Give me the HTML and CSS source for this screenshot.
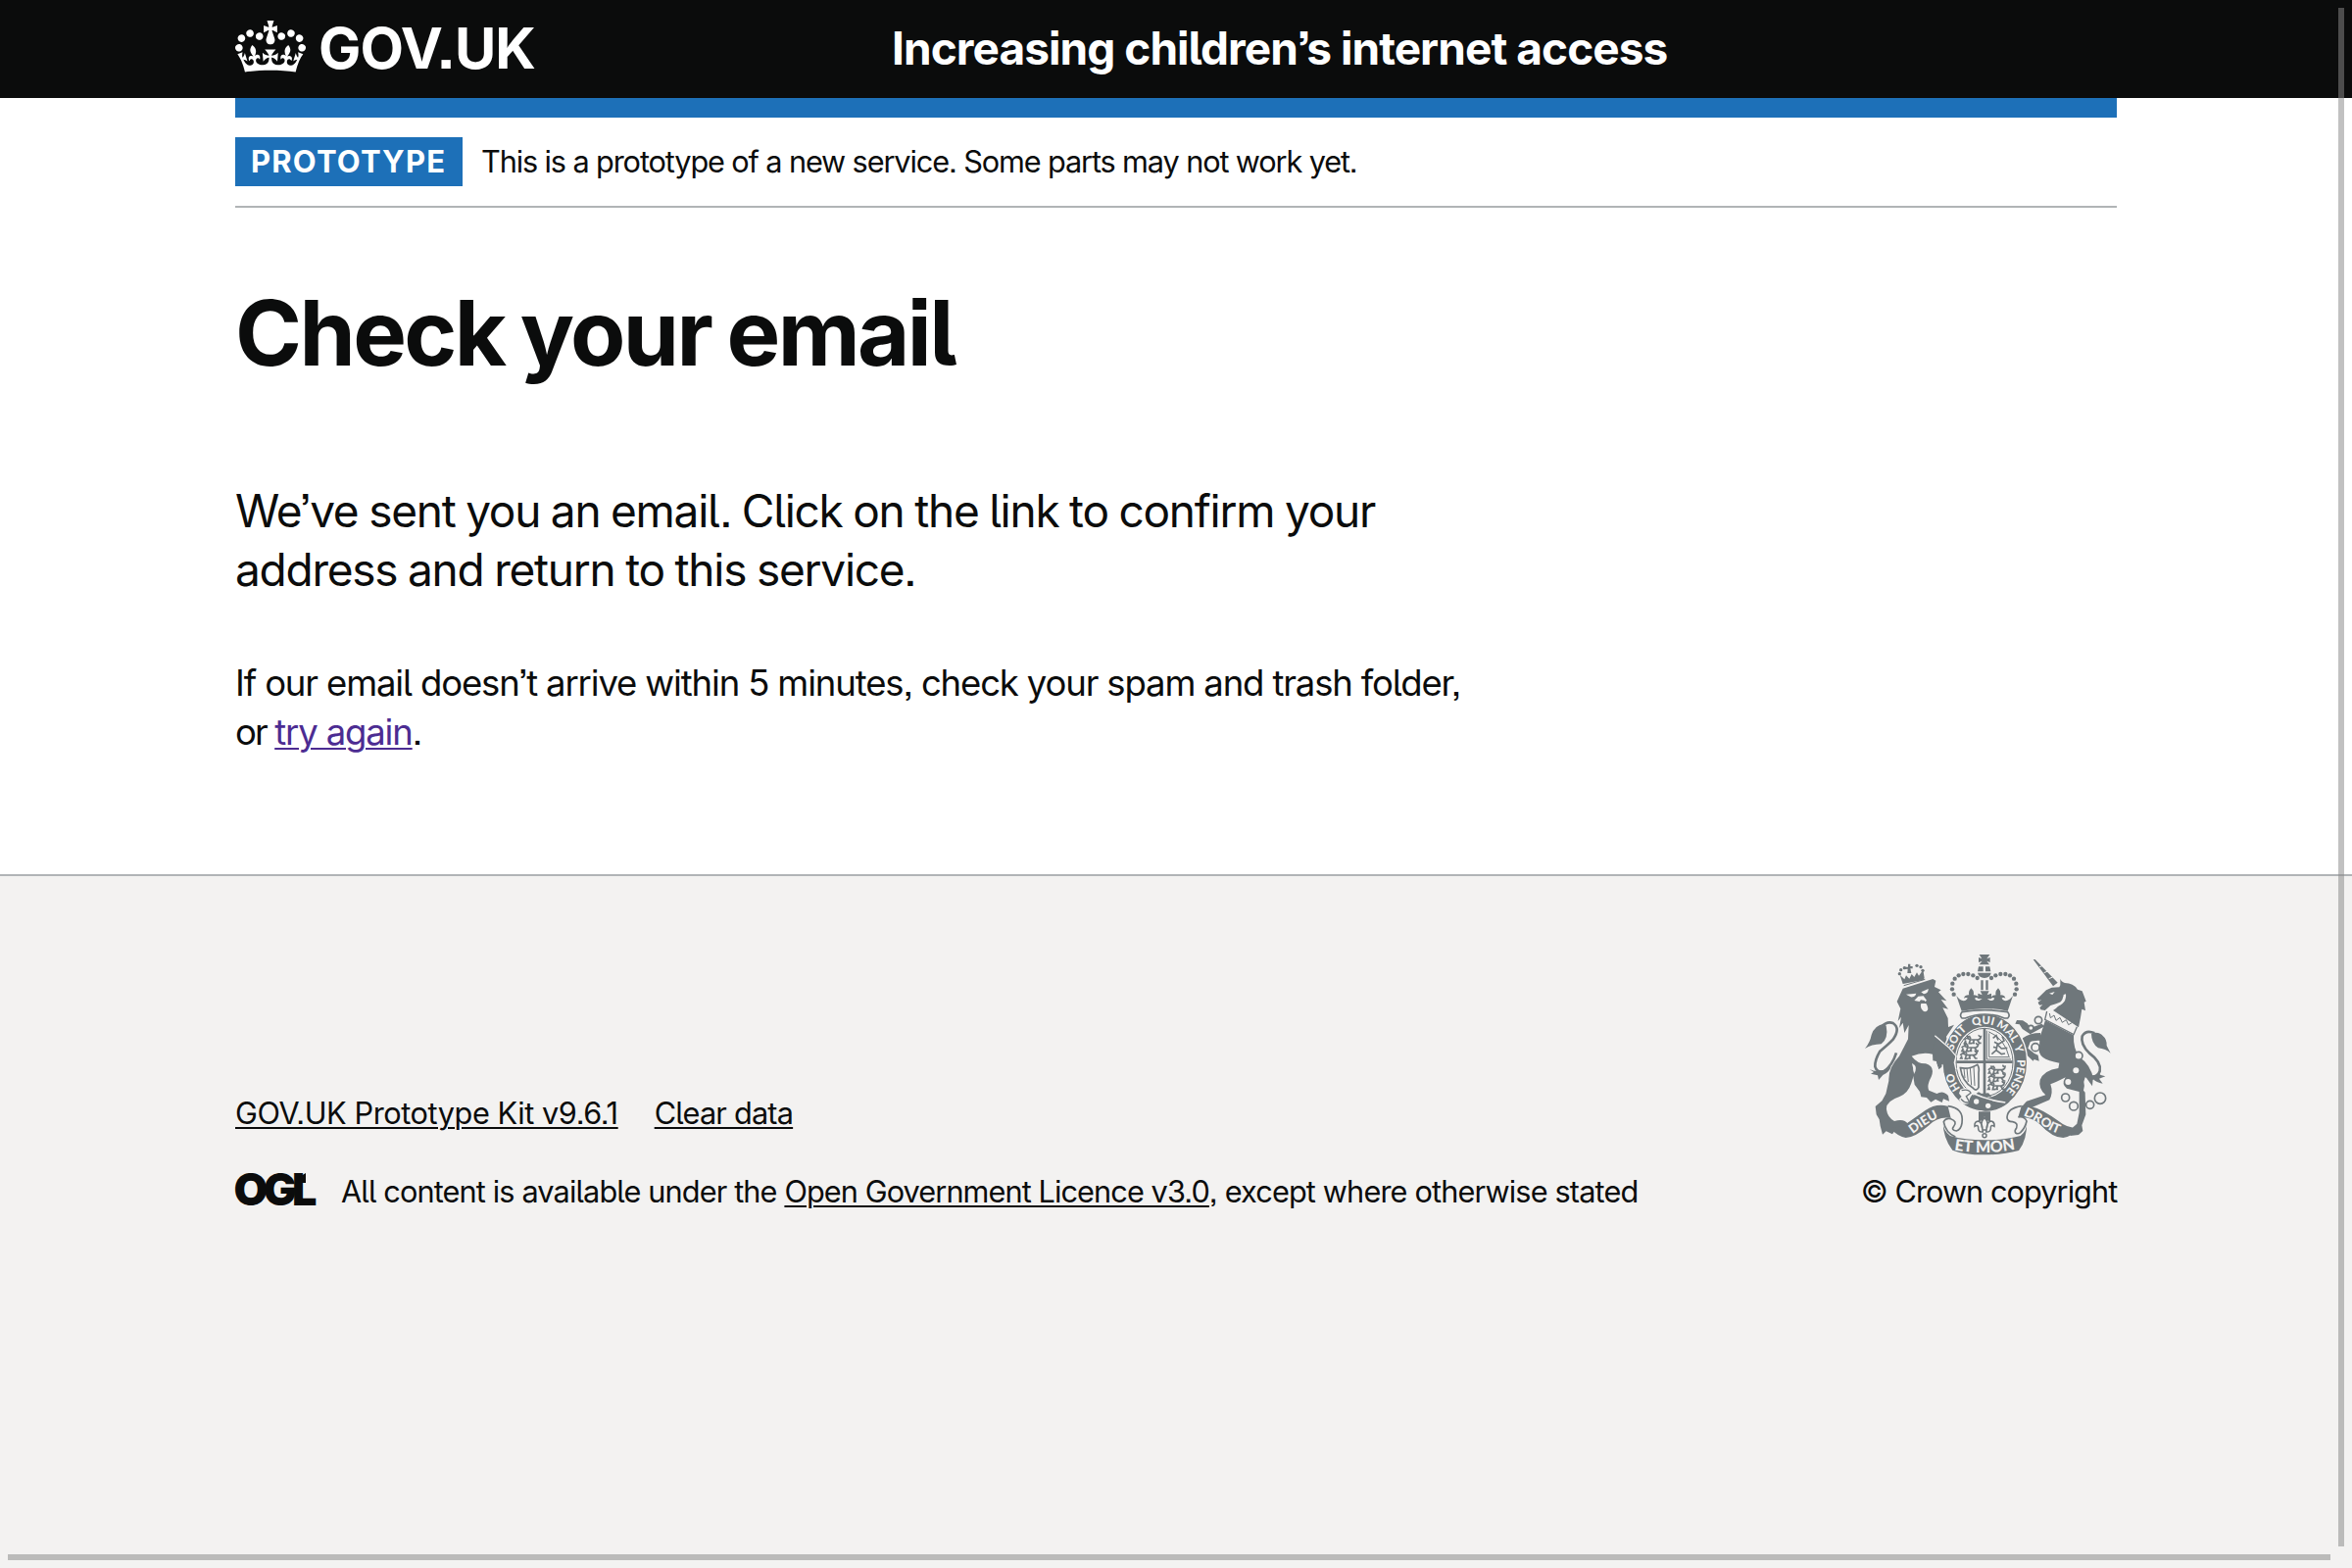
FILE: index.html
```html
<!DOCTYPE html>
<html lang="en">
<head>
<meta charset="utf-8">
<title>Check your email – Increasing children’s internet access</title>
<link rel="stylesheet" href="styles.css">
</head>
<body>
<header class="header">
  <div class="container header-row">
    <a class="logo" href="#">
      <svg class="crown" viewBox="0 0 132 97" aria-hidden="true"><path fill="currentColor" fill-rule="evenodd" d="M25 30.2c3.5 1.5 7.7-.2 9.1-3.7 1.5-3.6-.2-7.8-3.9-9.2-3.6-1.4-7.6.3-9.1 3.9-1.4 3.5.3 7.5 3.9 9zM9 39.5c3.6 1.5 7.8-.2 9.2-3.7 1.5-3.6-.2-7.8-3.9-9.1-3.6-1.5-7.6.2-9.1 3.8-1.4 3.5.3 7.5 3.8 9zM4.4 57.2c3.5 1.5 7.7-.2 9.1-3.8 1.5-3.6-.2-7.7-3.9-9.1-3.5-1.5-7.6.3-9.1 3.8-1.4 3.5.3 7.6 3.9 9.1zm38.3-21.4c3.5 1.5 7.7-.2 9.1-3.8 1.5-3.6-.2-7.7-3.9-9.1-3.6-1.5-7.6.3-9.1 3.8-1.3 3.6.4 7.7 3.9 9.1zm64.4-5.6c-3.6 1.5-7.8-.2-9.1-3.7-1.5-3.6.2-7.8 3.8-9.2 3.6-1.4 7.7.3 9.2 3.9 1.3 3.5-.4 7.5-3.9 9zm15.9 9.3c-3.6 1.5-7.7-.2-9.1-3.7-1.5-3.6.2-7.8 3.7-9.1 3.6-1.5 7.7.2 9.2 3.8 1.5 3.5-.3 7.5-3.8 9zm4.7 17.7c-3.6 1.5-7.8-.2-9.2-3.8-1.5-3.6.2-7.7 3.9-9.1 3.6-1.5 7.7.3 9.2 3.8 1.3 3.5-.4 7.6-3.9 9.1zM89.3 35.8c-3.6 1.5-7.8-.2-9.2-3.8-1.4-3.6.2-7.7 3.9-9.1 3.6-1.5 7.7.3 9.2 3.8 1.4 3.6-.3 7.7-3.9 9.1zM69.7 17.7l8.9 4.7V9.3l-8.9 2.8c-.2-.3-.5-.6-.9-.9L72.4 0H59.6l3.5 11.2c-.3.3-.6.5-.9.9l-8.8-2.8v13.1l8.8-4.7c.3.3.6.7.9.9l-5 15.4v.1c-.2.8-.4 1.6-.4 2.4 0 4.1 3.1 7.5 7 8.1h.2c.3 0 .7.1 1 .1.4 0 .7 0 1-.1h.2c4-.6 7.1-4.1 7.1-8.1 0-.8-.1-1.7-.4-2.4V34l-5.1-15.4c.4-.2.7-.6 1-.9zM66 92.8c16.9 0 32.8 1.1 47.1 3.2 4-16.9 8.9-26.7 14-33.5l-9.6-3.4c1 4.9 1.1 7.2 0 10.2-1.5-1.4-3-4.3-4.2-8.7L108.6 76c2.8-2 5-3.2 7.5-3.3-4.4 9.4-10 11.9-13.6 11.2-4.3-.8-6.3-4.6-5.6-7.9 1-4.7 5.7-5.9 8-.5 4.3-8.7-3-11.4-7.6-8.8 7.1-7.2 7.9-13.5 2.1-21.1-8 6.1-8.1 12.3-4.5 20.8-4.7-5.4-12.1-2.5-9.5 6.2 3.4-5.2 7.9-2 7.2 3.1-.6 4.3-6.4 7.8-13.5 7.2-10.3-.9-10.9-8-11.2-13.8 2.5-.5 7.1 1.8 11 7.3L80.2 60c-4.1 4.4-8 5.3-12.3 5.4 1.4-4.4 8-11.6 8-11.6H55.5s6.4 7.2 7.9 11.6c-4.2-.1-8-1-12.3-5.4l1.4 16.4c3.9-5.5 8.5-7.7 10.9-7.3-.3 5.8-.9 12.8-11.1 13.8-7.2.6-12.9-2.9-13.5-7.2-.7-5 3.8-8.3 7.1-3.1 2.7-8.7-4.6-11.6-9.4-6.2 3.7-8.5 3.6-14.7-4.6-20.8-5.8 7.6-5 13.9 2.2 21.1-4.7-2.6-11.9.1-7.7 8.8 2.3-5.5 7.1-4.2 8.1.5.7 3.3-1.3 7.1-5.7 7.9-3.5.7-9-1.8-13.5-11.2 2.5.1 4.7 1.3 7.5 3.3l-4.7-15.4c-1.2 4.4-2.7 7.2-4.3 8.7-1.1-3-.9-5.3 0-10.2l-9.5 3.4c5 6.9 9.9 16.7 14 33.5 14.8-2.1 30.8-3.2 47.7-3.2z"/></svg>
      <span class="logo-text">GOV.UK</span>
    </a>
    <a class="service-name" href="#">Increasing children’s internet access</a>
  </div>
</header>

<div class="container">
  <div class="header-bar"></div>
  <div class="phase-banner">
    <strong class="tag">PROTOTYPE</strong>
    <span class="phase-text">This is a prototype of a new service. Some parts may not work yet.</span>
  </div>
  <main class="main">
    <h1 class="heading">Check your email</h1>
    <p class="lead">We’ve sent you an email. Click on the link to confirm your<br>address and return to this service.</p>
    <p class="body">If our email doesn’t arrive within 5 minutes, check your spam and trash folder,<br><span class="or">or </span><a class="visited" href="#">try again</a>.</p>
  </main>
</div>

<footer class="footer">
  <div class="container footer-row">
    <div class="footer-meta">
      <div class="footer-links">
        <a class="kit" href="#">GOV.UK Prototype Kit v9.6.1</a>
        <a class="clear" href="#">Clear data</a>
      </div>
      <div class="licence">
        <svg class="ogl" viewBox="0 0 82 34" aria-label="Open Government Licence">
          <text class="ogl-text" x="-1.6" y="33.2" textLength="85">OGL</text>
          <path d="M62 6 72 0v10H62z"/>
        </svg>
        <span class="licence-text"><span class="l1">All content is available under the </span><a class="l2" href="#">Open Government Licence v3.0</a><span class="l3">, except where otherwise stated</span></span>
      </div>
    </div>
    <div class="crown-copyright">
      <svg class="arms" viewBox="42 42 756 618" aria-hidden="true">
        <defs>
          <path id="motto" d="M408 489A100 117 0 0 1 408 255A100 117 0 0 1 408 489"/>
          <path id="scroll-left" d="M181 597Q212 572 240 556Q265 540 296 535"/>
          <path id="scroll-right" d="M519 531Q555 545 585 565Q615 588 650 594"/>
          <path id="scroll-mid" d="M318 641Q408 656 500 639"/>
          <path id="passant" d="M0 8q6-9 13-4l7 3h22q8-1 9-10q-7 1-6-5M5 9l-4 8h7M18 8l-3 10h8M40 8l6 9h6M30 9l-4 8h6M12 3l-3-6h7l4 7"/>
        </defs>
        <!-- lion -->
        <g class="g">
          <path d="M158 146 250 117l9 5-4 19 20 10-8 6 25 27-17-4 22 29-17-4 16 32 1 27 18-7-24 36 6 28 24 27-8 29 5 25-16-11-11 16-11-23-12 10-7-25-11-2-1-20q-30-8-64 6 18 24 43 23 30 9 17 40-15 28-7 42l24 10q19-12 35 6l3 17-18-7-4 11-20-10-14 9-13-14-17-2-4-16-16-22-5-30q9-34-3-34 10 30-2 60-10 31-36 41-43 14-40 40 3 24 24 35 30-10 43 10v13l-16-8-7 16-15-7-11 16-19-9-11 10-7-26-3-20-9-15-3-25 20-17 12-22 9-40q-2-40 32-75l27-52 2-43-13 24-5-31-11 16 6-34-10 13 8-38-11-22z"/>
          <path d="M101 254q-30 4-39 34-4 22-20 42 20-13 50-14 23-18 15-56z"/>
          <path d="M56 393q28 16 66-9-4 18-25 27l-13 15-3-14-21-5 9-5z"/>
          <path d="m158 132-9-28 14 14 5-12 10 10 7-14 8 9 8-14 6 10 13-18 4 25-3 6z"/>
          <path d="M174 71h7v7h7v7h-7l3 14h-12l1-13-8 1v-7h9z"/>
          <circle cx="148" cy="101" r="5"/><circle cx="152" cy="89" r="5"/><circle cx="163" cy="83" r="5"/><circle cx="201" cy="76" r="5"/><circle cx="213" cy="80" r="5"/><circle cx="219" cy="91" r="5"/>
        </g>
        <path class="s3" d="m161 137 65-19"/>
        <path class="s8" d="M92 263q18-18 36-11 24 16 0 50-15 16-40 36-16 27-15 47 5 20 28 14 25-18 37-56"/>
        <g class="l">
          <path d="m168 164 31-3q-4 13-17 11zM214 157l22-10q1 13-14 16zM193 183l12-13 16-1 10 13-5 5-1-4-12-2-4 5zM214 192h15q8 10 5 20-8 9-16 0-8-8-4-20z"/>
          <path d="M192 408q12-20-1-31-1 14 1 31z"/>
        </g>
        <!-- unicorn -->
        <g class="g">
          <path d="M557 57h6l69 71-14 11z"/>
          <path d="M640 116q2 8 14 13 26 0 39 20l14 5 12 31-6 3 4 26-11-5-4 26-6 30-78-52q22-14 24-26-14 6-32 11l-17 15-13-2-3-7 9-8-9 1q-5-4-5-9l11-8-8 3-6-5 28-27 17-8 23-1 3-6z"/>
          <path d="m594 243 87 46q-2 42 18 67 35 23 43 70l-26-8-4 14q4 12-1 26l5 6 2 68-12 33 3 17-13 12-26 3 9-26 12-11 7-34 0-64-38-10q-18-13-4-34-33 17-46 21 9 26-3 48l-80 34q-16 18-42 20l22-17 30-33 58-19q-23-20-17-46 12-30 56-36l3-16q-70-11-61-47l1-30z"/>
          <path d="m592 262-44 24-24-16-9-14-13-2 5-11 18 1 14 9 10 14 34-13zM584 306q-26-2-36 4l-7 19 20 16 11 5 3 18-15-5-3 5-15-14-19-24 2-32q22-16 54-16z"/>
          <path d="M735 284q24-8 36 8 12 10 11 29l12 23q-15-13-38-16-21-15-21-44z"/>
          <path d="M712 400q32 22 43 4 8 9 23 11l-19 7 11 15q-19-3-30-14l-2 22-20-28z"/>
        </g>
        <path class="s8" d="M745 283q-26-12-38 9-6 24 22 52 38 28 32 55-6 19-30 19"/>
        <path class="l" d="m599 213 95 52-12 24-90-47z"/>
        <path class="s4" d="m599 216-6 25 88 46 10-24"/>
        <path class="s3" d="m607 222 3 14 11-8 6 16 12-9 7 15 12-8 7 15 12-7"/>
        <path class="l" d="m606 161 17-5-7 9zM657 163q4 36-45 42 36-11 38-40z"/>
        <path class="s3 light" d="m576 80 11-4M590 98l12-5M605 116l12-5"/>
        <g class="ring"><circle cx="573" cy="243" r="11"/><circle cx="550" cy="267" r="8"/><circle cx="564" cy="326" r="12"/><circle cx="696" cy="352" r="12"/><circle cx="656" cy="480" r="12"/><circle cx="681" cy="506" r="13"/><circle cx="731" cy="502" r="12"/><circle cx="762" cy="482" r="17"/></g>
        <g class="l"><circle cx="688" cy="397" r="9"/><circle cx="664" cy="432" r="9"/></g>
        <!-- royal crown -->
        <g class="g">
          <path d="M392 42h32l-9 13 10-4v15l-10-4 8 11h-31l9-11-11 4V51l10 4zM390 79h14v15h-17zM411 79h13l3 15h-16zM387 98h41q-2 14-20 16-18-2-21-16zM397 121h7v30h-7zM412 121h7v30h-7z"/>
          <path d="M322 168q10 14 22 16 10-1 12-9-8-3-11 2 1-12 16-11-4-10 6-21 11 10 7 21 16 0 15 11-5-5-11-1 3 9 14 7l9-6-13 1v-17l13 5-6-12h27l-6 12 13-5v17l-13-1 9 6q11 2 14-7-6-4-11 1-1-11 15-11-4-11 7-21 10 11 6 21 15-1 16 11-3-5-11-2 2 8 12 9 12-2 22-16l-16 47q-70-15-141 0z"/>
          <g id="pearls"><circle cx="314" cy="164" r="6.5"/><circle cx="309" cy="148" r="6.5"/><circle cx="310" cy="131" r="6.5"/><circle cx="317" cy="116" r="6.5"/><circle cx="329" cy="106" r="6.5"/><circle cx="343" cy="102" r="6.5"/><circle cx="358" cy="102" r="6.5"/><circle cx="373" cy="106" r="6.5"/><circle cx="386" cy="114" r="6.5"/></g>
          <use href="#pearls" transform="matrix(-1 0 0 1 815 0)"/>
        </g>
        <!-- garter -->
        <ellipse class="garter" cx="409" cy="373" rx="130" ry="149"/>
        <path class="mantle" d="M339 218q-9 11 0 19h10q60-24 120 0h10q9-8 0-19-70-12-140 0z"/>
        <ellipse class="l" cx="408" cy="372" rx="92" ry="109"/>
        <ellipse class="s3" cx="408" cy="372" rx="87" ry="104"/>
        <g class="motto">
          <text><textPath href="#motto" startOffset="112">HO</textPath></text>
          <text><textPath href="#motto" startOffset="245">SOIT</textPath></text>
          <text><textPath href="#motto" startOffset="337">QUI</textPath></text>
          <text><textPath href="#motto" startOffset="414">MAL</textPath></text>
          <text><textPath href="#motto" startOffset="472">Y</textPath></text>
          <text><textPath href="#motto" startOffset="556">PENSE</textPath></text>
        </g>
        <path class="s8" d="M408 268v208M322 371h172"/>
        <path class="g" d="m396 468 24-2 10 12h-34z"/>
        <path class="s3" d="M422 283v73h60M415 275v88h74M420 278q50 20 64 80"/>
        <path class="s5" d="m430 347 14-12 4-20-10-5M444 335l16 12 11-2M448 318l20-12-6-14M448 318l12 12 18-2M434 298l10-8 6 14M435 325l8 2"/>
        <g class="s5">
          <use href="#passant" x="346" y="296"/><use href="#passant" x="338" y="320"/><use href="#passant" x="334" y="343"/>
          <use href="#passant" x="420" y="388"/><use href="#passant" x="420" y="412"/><use href="#passant" x="418" y="437"/>
        </g>
        <path class="s5" d="M334 389q28 5 52-10 7 10 4 25v45q-8 14-18 1-32-18-38-61z"/>
        <path class="s3" d="m345 392 3 28M354 390l4 42M364 388l4 54M375 386l3 58"/>
        <path class="g" d="M342 480q28 0 48-17 45 30 95 30-35 30-76 28-45-4-67-41z"/>
        <path class="s5 light" d="M370 466q48 22 102 29"/>
        <path class="l" d="M334 455q28-12 40 10l-10 16-6 18q-20 5-28-14l8-8-8-10z"/>
        <path class="s4" d="M338 458q22-6 28 8l-14 10 10 18q-15 4-26-10"/>
        <g class="l"><circle cx="383" cy="492" r="8"/><circle cx="419" cy="505" r="8"/></g>
        <!-- lion's forepaw, over the garter -->
        <path class="g" d="m262 294 36 28 22 26-4 23 7 26-17-8-14 12-12-24-15 8-8-32-10-17z"/>
        <path class="s4 light" d="m256 290 42 36 23 27-5 20 5 22"/>
        <!-- scroll -->
        <g class="g">
          <path d="M118 573q33 3 61-20l48-34q32-22 68-13 31 9 22 40-46-14-79 19-43 38-71 38-24-4-49-30z"/>
          <path d="M699 573q-37 2-63-20-50-38-88-47-32-7-48 12-10 13-3 27 46-14 79 15 40 43 73 43 25-3 50-30z"/>
          <path d="M281 553q0 28 22 44 46 13 105 13 65 0 110-13 21-14 20-46 0 60-25 91-47 13-105 13-64 0-98-14-29-36-29-88z"/>
        </g>
        <path class="fold" d="M296 506q50 6 43 52-3 20-17 24-18-3-8-14 12-15-9-23-16-4-22 9 6 34 36 46"/>
        <path class="fold" d="M521 506q-42 6-44 34 0 14 17 14 18 3 12 19-7 8-3 15 7 5 15-1 15-15 19-35-7-16-26-12"/>
        <g class="motto">
          <text class="scroll-text"><textPath href="#scroll-left" startOffset="56">DIEU</textPath></text>
          <text class="scroll-text"><textPath href="#scroll-right" startOffset="69">DROIT</textPath></text>
          <text class="mid-text"><textPath href="#scroll-mid" startOffset="91">ET MON</textPath></text>
        </g>
        <!-- fleur-de-lis badge -->
        <path class="g" d="M390 523h36v31l-12-5-6-11-7 11-11 5z"/>
        <path class="fleur" d="M408 541q-16 15-5 38h10q11-23-5-38zM402 580q0-23-13-28-13 2-11 16 8-6 11 2-2 16 14 15zM414 580q0-23 13-28 13 2 11 16-8-6-11 2 2 16-14 15z"/>
        <circle class="fleur" cx="408" cy="596" r="6"/>
      </svg>
      <a class="copyright" href="#">© Crown copyright</a>
    </div>
  </div>
</footer>
<div class="scrollbar scrollbar-y"></div>
<div class="scrollbar scrollbar-x"></div>
</body>
</html>
```
FILE: styles.css
```css
* { box-sizing: border-box; }

html, body { height: 100%; }

body {
  margin: 0;
  display: flex;
  flex-direction: column;
  overflow: hidden;
  background: #fff;
  color: #0b0c0c;
  font-family: Inter, "Noto Sans", sans-serif;
  font-feature-settings: "cv05", "ss07", "ss08";
}

a { color: inherit; }
h1, p { margin: 0; }

.container { width: 1920px; margin: 0 auto; }

/* header */
.header { height: 100px; background: #0b0c0c; color: #fff; }
.header-row { display: flex; align-items: flex-start; padding-top: 19px; }
.header a { text-decoration: none; }
.logo { width: 670px; display: flex; gap: 13px; }
.crown { width: 72px; height: 53px; margin-top: 2px; }
.logo-text { font-size: 57.8px; line-height: 60px; font-weight: 700; letter-spacing: -.9px; }
.service-name { font-size: 46px; line-height: 60px; font-weight: 700; letter-spacing: -.94px; }
.header-bar { height: 20px; background: #1d70b8; }

/* phase banner */
.phase-banner {
  display: flex;
  align-items: center;
  gap: 19px;
  height: 92px;
  border-bottom: 2px solid #b1b4b6;
}
.tag {
  width: 232px;
  padding: 0 16px;
  background: #1d70b8;
  color: #fff;
  font-size: 31px;
  line-height: 50px;
  letter-spacing: 1.2px;
}
.phase-text { font-size: 30.7px; line-height: 40px; letter-spacing: -1.13px; }

/* content */
.main { padding: 78px 0 120px; }
.heading { font-size: 92px; line-height: 100px; font-weight: 700; letter-spacing: -2.5px; word-spacing: -4px; }
.lead { margin-top: 101px; font-size: 46px; line-height: 60px; letter-spacing: -1.25px; word-spacing: -1px; }
.body { margin-top: 61px; font-size: 36.5px; line-height: 50px; letter-spacing: -1.15px; }
.heading { letter-spacing: -2.6px; word-spacing: -3px; }
.lead { letter-spacing: -1.25px; word-spacing: -1px; }
.or { letter-spacing: -1.9px; }
.body a, .footer a { text-decoration-thickness: 2px; text-underline-offset: 3px; }
.visited { color: #4c2c92; }

/* footer */
.footer {
  flex: 1;
  border-top: 2px solid #b1b4b6;
  background: #f3f2f1;
  font-size: 30.7px;
  line-height: 40px;
}
.footer-row { display: flex; justify-content: space-between; align-items: flex-end; padding-top: 80px; }
.footer-links { display: flex; gap: 37px; margin-bottom: 40px; }
.kit { letter-spacing: -.43px; }
.clear { letter-spacing: -.8px; }
.licence { display: flex; gap: 26px; }
.ogl { width: 82px; height: 34px; margin-top: 1px; fill: #0b0c0c; overflow: visible; }
.ogl-text { font-weight: 900; font-size: 45px; }
.licence-text { white-space: pre; }
.l1 { letter-spacing: -.87px; }
.l2 { letter-spacing: -.92px; }
.l3 { letter-spacing: -.85px; }
.crown-copyright { display: flex; flex-direction: column; align-items: center; width: 261px; }
.copyright { margin-top: 16px; white-space: nowrap; letter-spacing: -.95px; }
.footer .copyright { text-decoration: none; }

/* coat of arms */
.arms { width: 252px; height: 206px; margin-right: 1px; }
.g { fill: #6f777b; }
.l { fill: #f3f2f1; }
.s8, .s5, .s4, .s3, .ring { fill: none; stroke: #6f777b; }
.s8 { stroke-width: 8; }
.s5 { stroke-width: 5; }
.s4 { stroke-width: 4; }
.s3 { stroke-width: 3; }
.ring { stroke-width: 5; }
.ring circle { fill: #f3f2f1; }
.light { stroke: #f3f2f1; }
.garter { fill: #6f777b; stroke: #f3f2f1; stroke-width: 4; }
.mantle, .fold { fill: #f3f2f1; stroke: #6f777b; stroke-width: 5; }
.fleur { fill: #f3f2f1; stroke: #6f777b; stroke-width: 4.5; }
.motto { fill: #f3f2f1; font-family: Lato, sans-serif; font-weight: 900; font-size: 34px; text-anchor: middle; }
.scroll-text { font-size: 39px; }
.mid-text { font-size: 48px; }

/* overlay scrollbars */
.scrollbar { position: absolute; background: rgba(137, 137, 137, .525); }
.scrollbar-y { left: 2386px; top: 8px; width: 6px; height: 1570px; }
.scrollbar-x { left: 8px; top: 1586px; width: 2370px; height: 6px; }
```
